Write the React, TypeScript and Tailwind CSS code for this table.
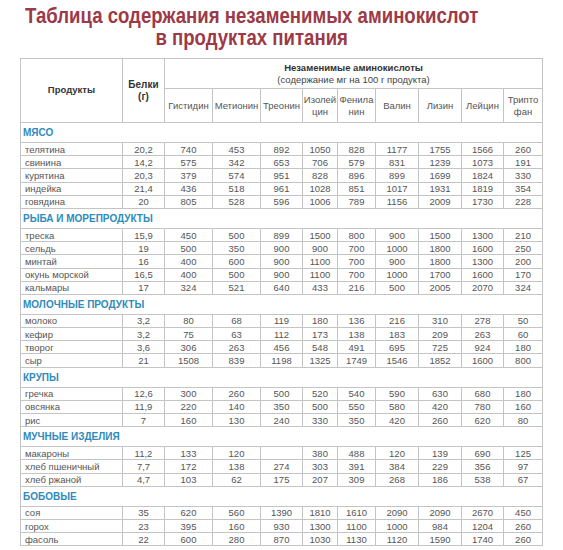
import React from "react";

type Row = [string, string, ...string[]];

const sections: { title: string; rows: Row[] }[] = [
  {
    title: "МЯСО",
    rows: [
      ["телятина", "20,2", "740", "453", "892", "1050", "828", "1177", "1755", "1566", "260"],
      ["свинина", "14,2", "575", "342", "653", "706", "579", "831", "1239", "1073", "191"],
      ["курятина", "20,3", "379", "574", "951", "828", "896", "899", "1699", "1824", "330"],
      ["индейка", "21,4", "436", "518", "961", "1028", "851", "1017", "1931", "1819", "354"],
      ["говядина", "20", "805", "528", "596", "1006", "789", "1156", "2009", "1730", "228"],
    ],
  },
  {
    title: "РЫБА И МОРЕПРОДУКТЫ",
    rows: [
      ["треска", "15,9", "450", "500", "899", "1500", "800", "900", "1500", "1300", "210"],
      ["сельдь", "19", "500", "350", "900", "900", "700", "1000", "1800", "1600", "250"],
      ["минтай", "16", "400", "600", "900", "1100", "700", "900", "1800", "1300", "200"],
      ["окунь морской", "16,5", "400", "500", "900", "1100", "700", "1000", "1700", "1600", "170"],
      ["кальмары", "17", "324", "521", "640", "433", "216", "500", "2005", "2070", "324"],
    ],
  },
  {
    title: "МОЛОЧНЫЕ ПРОДУКТЫ",
    rows: [
      ["молоко", "3,2", "80", "68", "119", "180", "136", "216", "310", "278", "50"],
      ["кефир", "3,2", "75", "63", "112", "173", "138", "183", "209", "263", "60"],
      ["творог", "3,6", "306", "263", "456", "548", "491", "695", "725", "924", "180"],
      ["сыр", "21", "1508", "839", "1198", "1325", "1749", "1546", "1852", "1600", "800"],
    ],
  },
  {
    title: "КРУПЫ",
    rows: [
      ["гречка", "12,6", "300", "260", "500", "520", "540", "590", "630", "680", "180"],
      ["овсянка", "11,9", "220", "140", "350", "500", "550", "580", "420", "780", "160"],
      ["рис", "7", "160", "130", "240", "330", "350", "420", "260", "620", "80"],
    ],
  },
  {
    title: "МУЧНЫЕ ИЗДЕЛИЯ",
    rows: [
      ["макароны", "11,2", "133", "120", "", "380", "488", "120", "139", "690", "125"],
      ["хлеб пшеничный", "7,7", "172", "138", "274", "303", "391", "384", "229", "356", "97"],
      ["хлеб ржаной", "4,7", "103", "62", "175", "207", "309", "268", "186", "538", "67"],
    ],
  },
  {
    title: "БОБОВЫЕ",
    rows: [
      ["соя", "35", "620", "560", "1390", "1810", "1610", "2090", "2090", "2670", "450"],
      ["горох", "23", "395", "160", "930", "1300", "1100", "1000", "984", "1204", "260"],
      ["фасоль", "22", "600", "280", "870", "1030", "1130", "1120", "1590", "1740", "260"],
    ],
  },
];

const widths = [102, 42, 48, 48, 42, 35, 38, 43, 43, 42, 39];

const acids: React.ReactNode[] = [
  "Гистидин",
  "Метионин",
  "Треонин",
  <>Изолей<br />цин</>,
  <>Фенила<br />нин</>,
  "Валин",
  "Лизин",
  "Лейцин",
  <>Трипто<br />фан</>,
];

const cell = "border border-[#c4c4c4]";

export default function App() {
  return (
    <div className="w-[563px] h-[550px] overflow-hidden bg-white font-['Liberation_Sans',Arial,sans-serif]">
      <div className="h-[50px] pt-[5px] pl-[25px]">
        <h1 className="inline-block origin-top scale-y-[1.14] text-center text-[18.6px] leading-[19px] font-bold text-[#9c3a47]">
          Таблица содержания незаменимых аминокислот
          <br />в продуктах питания
        </h1>
      </div>

      <table className="mt-[8px] ml-[20px] w-[523px] table-fixed border-collapse border border-[#bcbcbc] text-[#444]">
        <colgroup>
          {widths.map((w, i) => (
            <col key={i} style={{ width: w }} />
          ))}
        </colgroup>
        <thead>
          <tr className="h-[30px]">
            <th rowSpan={2} className={`${cell} text-[9.5px] font-bold text-[#333]`}>
              Продукты
            </th>
            <th rowSpan={2} className={`${cell} text-[10px] leading-[12px] font-bold text-[#333]`}>
              Белки
              <br />
              (г)
            </th>
            <th colSpan={9} className={`${cell} text-[9.5px] leading-[12px] text-[#444]`}>
              <div className="font-bold text-[#333]">Незаменимые аминокислоты</div>
              <div className="font-normal">(содержание мг на 100 г продукта)</div>
            </th>
          </tr>
          <tr className="h-[34px]">
            {acids.map((a, i) => (
              <th key={i} className={`${cell} text-[9.5px] leading-[12px] font-normal text-[#555]`}>
                {a}
              </th>
            ))}
          </tr>
        </thead>
        <tbody>
          {sections.map((s) => (
            <React.Fragment key={s.title}>
              <tr className="h-[20px]">
                <td colSpan={11} className={`${cell} pl-[2px] text-[10px] font-bold text-[#2e8bbb]`}>
                  {s.title}
                </td>
              </tr>
              {s.rows.map((r) => (
                <tr key={r[0]} className="h-[13.2px]">
                  {r.map((c, i) => (
                    <td
                      key={i}
                      className={
                        i === 0
                          ? `${cell} pl-[4px] text-left text-[9.5px] leading-[11px] text-[#555]`
                          : `${cell} text-center text-[9.5px] leading-[11px] text-[#555]`
                      }
                    >
                      {c}
                    </td>
                  ))}
                </tr>
              ))}
            </React.Fragment>
          ))}
        </tbody>
      </table>
    </div>
  );
}
